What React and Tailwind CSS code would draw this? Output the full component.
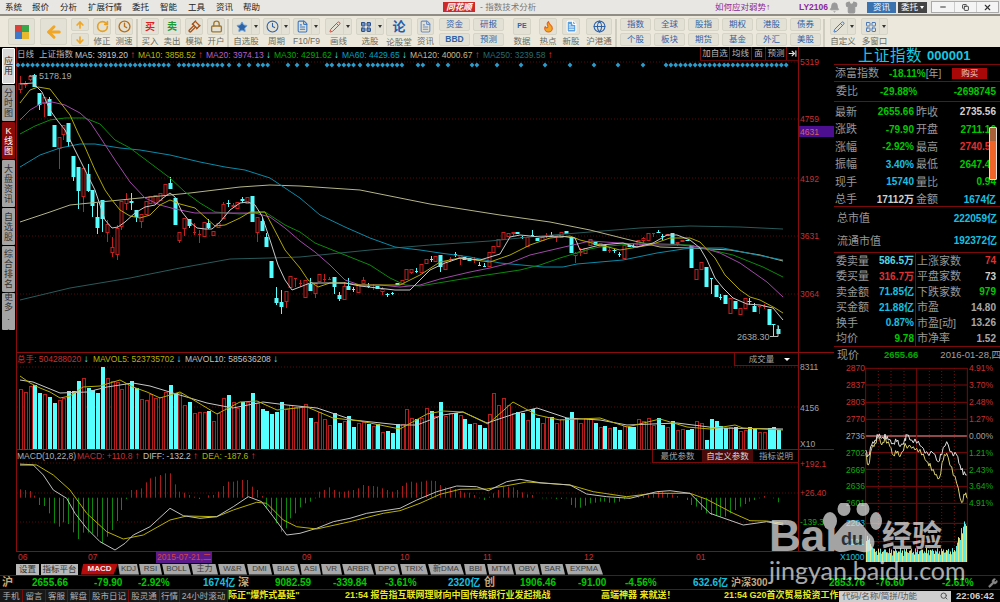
import React from "react";
import { Bell, Shirt, Minus, X, Copy, Gavel, Lock, Flame, Pencil, Wrench, Search, RotateCw, Star, Clock, FileText, Globe, LayoutGrid, ArrowLeft, ArrowUp, ArrowDown, ArrowRightToLine } from "lucide-react";

// candles in page pixels: [red?, bodyTop, bodyBottom, wickTop, wickBottom]
const candles = [
  [1,83,89,76,93],[1,83,84,81,88],[1,76,79,75,81],[0,75,87,74,87],[0,93,105,93,110],[1,97,103,97,117],[0,99,116,97,116],[0,125,147],[1,137,148,137,169],[1,125,134,125,140],
  [0,123,142,123,147],[0,156,177,156,181],[0,167,191,167,209],[1,168,196,168,212],[0,174,191,164,192],[0,190,206,190,217],[0,217,228,203,234],[0,200,219,200,232],[1,224,232,220,242],[1,247,252,237,257],
  [1,228,254,225,260],[1,201,226,201,230],[1,199,203,193,210],[0,201,203,193,210],[0,210,217,210,222],[1,214,221,214,228],[1,201,214],[1,196,203,196,204],[1,195,203],[1,193,200],
  [1,184,195],[0,183,189,177,189],[0,198,225],[1,232,240,232,243],[1,218,228,218,236],[0,219,226,219,228],[1,232,232,223,235],[1,234,234,230,243],[1,222,236],[0,223,228,219,229],
  [1,231,235],[1,223,227],[1,204,218,202,218],[0,203,204,200,207],[1,205,206,203,208],[1,202,208],[0,199,201,197,203],[1,197,203],[0,196,222],[1,217,232,217,242],
  [0,221,231,217,231],[0,237,247,233,247],[0,261,278],[0,298,303,287,305],[0,302,307,290,314],[1,291,301,291,308],[1,276,287],[1,278,278,278,287],
  [1,283,283,280,287],[1,280,297],[0,284,291,278,291],[1,283,293,283,298],[1,274,281],[1,279,279,274,282],[1,279,279,277,280],[0,277,287,277,294],[0,295,299,292,301],[1,286,299,282,299],
  [0,286,290,278,290],[0,289,289,287,292],[1,284,292],[1,280,283,277,283],[0,286,286,283,288],[1,287,287,284,290],[0,286,289],[1,289,291,287,295],[0,294,295,293,297],[0,293,293,292,295],
  [0,283,285],[1,280,284],[1,269,279],[1,269,272,269,274],[0,271,271,268,273],[1,264,272],[1,259,263],[0,259,259,256,262],[1,256,261],[0,255,267,255,272],
  [1,261,269],[1,259,259,257,262],[0,254,254,252,257],[1,255,258,255,265],[0,257,260],[0,258,261],[1,259,259,257,263],[0,265,265,262,266],[0,266,266,263,267],[1,252,266],
  [1,246,252],[1,239,246],[1,232,239],[1,233,236],[1,232,233,232,236],[0,232,234],[0,237,238,236,239],[1,237,246],[0,235,235,230,237],[0,238,241],
  [1,237,240],[1,235,235,233,238],[0,235,236,232,237],[1,236,236,236,242],[1,232,237],[0,231,234],[0,237,253,237,253],[1,253,255,252,263],[1,251,252,248,256],[1,248,253],
  [1,239,245],[0,242,245],[1,243,246],[0,245,251],[1,250,250,248,253],[0,250,251,249,253],[0,254,254,252,257],[1,245,258],[0,245,247],[0,246,246,244,248],
  [1,240,246],[1,238,240,237,244],[1,233,240],[1,233,233,233,237],[0,232,233,230,233],[0,236,236,234,240],[1,234,235],[0,233,244],[1,242,243,242,246],[1,240,241],
  [0,240,241],[0,245,268],[1,269,279],[1,262,269],[0,267,287],[0,278,278,278,294],[0,285,297],[0,297,297,294,300],[0,295,304],[1,298,313],
  [0,301,309],[1,308,314],[1,298,308],[0,301,302,298,305],[0,306,312,303,312],[1,306,306,306,314],[1,306,306,304,309],[0,309,325],[0,324,325,324,336],[0,329,334,326,334],
];

const ma5 = [20,84,33,83,42,92,50,110,57,120,65,130,75,150,85,170,95,190,105,220,112,228,118,227,125,222,135,213,145,207,155,205,163,198,170,193,175,197,182,212,190,222,197,228,205,229,212,229,220,222,230,210,240,203,248,202,255,205,262,216,270,240,278,265,285,280,292,290,300,287,310,283,345,283,360,286,395,290,410,290,415,285,430,270,445,263,460,258,480,260,500,254,510,237,520,235,540,237,560,236,575,238,580,250,600,245,623,243,637,247,653,243,667,235,677,235,690,240,700,248,707,260,715,278,723,288,733,298,747,304,760,305,773,308,783,320];
const ma10 = [20,103,30,90,38,87,50,89,60,102,70,115,78,133,85,147,95,170,105,190,112,200,120,210,130,216,140,218,150,215,160,205,170,200,180,204,195,208,205,217,215,226,225,225,240,218,250,212,265,212,272,225,285,250,300,268,308,280,318,287,330,283,345,283,360,285,400,285,420,275,440,262,460,258,490,262,510,255,530,245,550,238,570,236,580,240,600,245,620,250,650,245,670,238,690,238,700,242,715,258,725,275,740,290,750,297,760,300,775,308,783,313];
const ma20 = [20,120,30,110,42,103,52,102,65,105,80,113,90,122,100,137,115,160,130,182,145,198,160,205,175,209,195,213,240,213,255,213,270,217,285,228,300,241,315,252,330,265,345,280,360,285,380,285,400,287,420,285,440,279,470,272,490,268,510,263,530,255,560,248,590,241,620,243,650,245,680,245,700,247,720,253,740,263,767,282,783,297];
const ma30 = [20,134,35,126,50,120,65,118,85,118,100,124,115,140,130,148,150,163,170,178,185,192,200,203,215,212,240,214,265,212,285,225,300,232,315,243,340,253,370,265,390,278,405,285,420,286,450,281,480,276,520,270,540,265,560,258,590,249,600,247,640,243,690,245,720,252,733,255,763,267,783,277];
const ma60 = [20,167,40,155,60,148,80,144,95,144,120,148,140,150,170,155,200,162,225,167,245,170,270,178,285,188,300,198,320,215,345,227,370,238,395,247,420,250,440,253,470,257,500,263,543,267,563,267,577,264,600,262,623,260,657,253,690,248,723,248,757,255,783,260];
const ma120 = [20,222,50,212,70,205,100,202,140,198,190,193,240,187,270,185,300,186,360,190,430,204,500,215,550,222,590,230,630,240,660,247,690,248,730,250,760,255,783,261];
const ma250 = [20,300,70,288,130,278,180,268,230,259,270,258,300,257,370,250,430,245,490,241,540,236,590,232,640,228,690,226,740,227,783,229];

// volume bar tops in 3x crop units, negative means a cyan bar
const vols = [117,125,108,-104,-130,133,-142,-158,150,143,-124,-124,-94,84,-115,-120,-130,-50,85,93,96,118,100,-94,-115,148,150,132,145,140,125,-106,-128,128,165,-157,190,185,185,-183,212,190,145,-134,155,175,-155,155,-130,160,-177,-183,-192,-185,-155,178,165,170,170,163,-204,215,185,208,226,-190,-218,212,-198,-231,218,215,-222,228,-222,245,-243,-248,-223,
  222,178,205,-207,205,175,-182,198,-156,197,190,-188,195,-207,-222,220,-225,-235,193,130,165,143,165,190,-185,-190,210,-178,-205,218,200,-202,218,208,-205,-187,205,218,203,207,-218,232,-227,235,-232,-240,228,-232,-232,208,213,205,225,-205,-224,232,-213,240,238,-240,-237,213,220,-270,-208,-212,-228,-235,232,-232,243,240,-230,-235,245,245,-233,-230,-241];
const mavol5 = [20,376,30,383,40,388,50,392,60,398,70,396,83,387,100,386,120,380,133,387,147,392,160,398,180,392,197,402,217,414,240,402,257,401,277,410,307,407,333,418,360,421,400,429,427,414,443,411,463,412,488,424,513,402,537,415,560,420,600,418,627,427,660,419,687,427,710,429,735,425,743,428,783,430];
const mavol10 = [20,380,33,382,60,393,87,392,107,387,133,383,150,386,173,393,207,403,233,408,263,402,287,405,317,408,353,420,400,425,417,425,443,415,463,412,487,423,517,413,537,408,567,418,600,420,627,425,677,423,717,428,783,429];

// macd bar ends in 3x crop units, the zero line is at 443
const macd = [418,420,423,437,465,468,490,520,530,517,522,547,567,548,548,550,560,580,560,540,513,480,447,420,420,415,397,385,380,375,370,370,403,425,428,435,440,447,443,436,435,425,408,395,395,392,390,390,410,420,438,475,490,520,545,535,505,490,472,460,455,445,425,420,412,420,425,425,422,420,415,405,408,408,410,415,420,425,420,
  408,398,395,398,395,392,392,393,405,412,415,417,422,428,428,435,445,450,440,430,420,410,410,412,420,427,433,435,443,445,445,445,447,447,445,465,473,473,467,460,458,455,455,458,458,455,448,445,443,440,437,435,428,425,425,430,433,438,443,450,465,470,480,490,495,497,500,500,490,480,470,462,455,450,445,438,443,445,457];
const diff = [60,345,100,345,130,375,160,420,200,445,225,490,260,535,300,575,345,600,375,580,400,555,450,530,510,475,550,497,600,505,650,500,700,470,745,440,785,455,820,500,860,555,900,550,950,535,1000,515,1050,505,1100,490,1200,475,1250,450,1310,425,1370,408,1430,410,1465,422,1520,395,1560,388,1620,398,1710,405,1760,432,1820,440,1890,445,1970,425,2010,422,2070,430,2130,490,2230,525,2300,515,2350,525];
const dea = [60,342,110,345,160,375,210,420,260,490,320,545,370,567,430,555,510,510,560,498,650,500,700,480,770,457,800,460,850,510,890,530,950,537,1050,515,1150,490,1200,482,1260,460,1320,433,1380,418,1460,417,1520,407,1580,396,1710,405,1780,425,1880,440,1960,430,2070,430,2120,448,2200,490,2250,512,2300,513,2350,520];

const miniWhite = [107,330,115,345,125,315,135,300,145,290,155,295,165,282,175,300,190,310,200,305,210,320,225,295,230,285,245,300,260,310,275,320,290,335,310,340,325,365,335,345,350,305,365,335,380,345,390,375,400,405,410,405];
const miniYellow = [107,340,115,375,125,325,135,310,145,295,155,315,165,290,180,320,190,345,200,340,210,350,225,310,245,325,260,325,275,345,290,365,300,370,315,405,328,415,340,360,350,340,365,380,380,430,395,488,405,465,412,475];

const dots = [[18,37],[43,81],[86,101],[106,149],[154,168],[179,193],[198,222],[229,229],[239,239],[249,249],[258,266],[288,288],[297,297],[307,307],[327,333],[339,353],[360,360],[368,402],[418,425],[438,438],[448,448],[472,478],[497,497],[521,521],[545,545],[570,570],[594,594],[618,618],[643,643],[666,723],[728,786]];

const toPts = (a, fx = (v) => v, fy = (v) => v) => {
  const out = [];
  for (let i = 0; i < a.length; i += 2) out.push(`${fx(a[i]).toFixed(1)},${fy(a[i + 1]).toFixed(1)}`);
  return out.join(" ");
};
// roughens a minute line: extra points between the anchors
const jag = (a) => {
  const out = [];
  for (let i = 0; i + 2 < a.length; i += 2) {
    for (let k = 0; k < 3; k++) {
      const t = k / 3;
      const wob = k === 0 ? 0 : ((i + k * 7) % 5 - 2) * 5;
      out.push(a[i] + (a[i + 2] - a[i]) * t, a[i + 1] + (a[i + 3] - a[i + 1]) * t + wob);
    }
  }
  out.push(a[a.length - 2], a[a.length - 1]);
  return out;
};
const barX = (i) => 20 + i * 4.83;

function Line({ pts, color, w = 1 }) {
  return <polyline points={pts} fill="none" stroke={color} strokeWidth={w} strokeLinejoin="round" />;
}

function Tool({ className, label, arrow, children }) {
  return (
    <div className={`flex flex-col items-center ${className}`}>
      <div className="h-[18px] w-full flex bg-[#e3e1d5] border border-[#d6d4c7] rounded-[2px]">
        <div className="flex-1 flex items-center justify-center min-w-0">{children}</div>
        {arrow && (
          <div className="w-[8px] flex items-center justify-center border-l border-[#d6d4c7]">
            <div className="w-0 h-0 border-x-[2.5px] border-x-transparent border-t-[3px] border-t-[#333]" />
          </div>
        )}
      </div>
      <div className="mt-[1px] text-[8.5px] leading-[11px] text-[#6a6a60] whitespace-nowrap">{label}</div>
    </div>
  );
}

function Sep({ className }) {
  return <div className={`w-[2px] h-[28px] mt-[1px] border-l border-r border-[#cfcdbf] ${className}`} />;
}

function MiniBtn({ children, bold }) {
  return (
    <div className={`h-[13px] w-full flex items-center justify-center bg-[#e3e1d5] border border-[#d6d4c7] rounded-[2px] text-[8.5px] text-[#2f63a8] ${bold ? "font-bold" : ""}`}>
      {children}
    </div>
  );
}

function Toolbar() {
  const pairs = [["指数", "个股"], ["全球", "板块"], ["股指", "期货"], ["期权", "基金"], ["港股", "外汇"], ["债券", "美股"]];
  return (
    <div className="h-[31px] flex pt-[2px] bg-[#ece9dc]">
      <div className="ml-[8px] w-[27px] h-[27px] flex items-center justify-center bg-[#e3e1d5] border border-[#d6d4c7] rounded-[2px]">
        <div className="grid grid-cols-2 w-[14px] h-[14px]">
          <div className="bg-[#d9423a]" />
          <div className="bg-[#3aa64a]" />
          <div className="bg-[#3f78c8]" />
          <div className="bg-[#e8b92e]" />
        </div>
      </div>
      <div className="ml-[5px] w-[27px] h-[27px] flex items-center justify-center bg-[#e3e1d5] border border-[#d6d4c7] rounded-[2px]">
        <ArrowLeft size={18} strokeWidth={4} color="#f0a626" />
      </div>
      <div className="ml-[4px] w-[18px] flex flex-col gap-[2px]">
        <MiniBtn><ArrowUp size={10} strokeWidth={4} color="#f0a626" /></MiniBtn>
        <MiniBtn><ArrowDown size={10} strokeWidth={4} color="#f0a626" /></MiniBtn>
      </div>
      <Tool className="ml-[4px] w-[18px]" label="修正"><RotateCw size={13} strokeWidth={3} color="#e8a020" /></Tool>
      <Tool className="ml-[4px] w-[18px]" label="测速"><Clock size={13} strokeWidth={2.5} color="#b8701c" /></Tool>
      <Sep className="ml-[3px]" />
      <Tool className="ml-[3px] w-[18px]" label="买入"><span className="text-[10px] font-bold text-[#e02020]">买</span></Tool>
      <Tool className="ml-[4px] w-[18px]" label="卖出"><span className="text-[10px] font-bold text-[#1a9a3a]">卖</span></Tool>
      <Tool className="ml-[4px] w-[18px]" label="模拟"><Gavel size={13} strokeWidth={2.5} color="#a8551c" /></Tool>
      <Tool className="ml-[4px] w-[18px]" label="开户"><Lock size={13} strokeWidth={2.5} color="#a07830" /></Tool>
      <Sep className="ml-[2px]" />
      <Tool className="ml-[3px] w-[28px]" label="自选股" arrow><Star size={12} fill="#2f63a8" color="#6ea4dc" /></Tool>
      <Tool className="ml-[3px] w-[27px]" label="周期" arrow><Clock size={13} color="#2f63a8" /></Tool>
      <Tool className="ml-[3px] w-[27px]" label="F10/F9" arrow><FileText size={13} color="#3a78c8" /></Tool>
      <Tool className="ml-[5px] w-[27px]" label="画线" arrow><Pencil size={12} color="#d04a3a" /></Tool>
      <Tool className="ml-[4px] w-[28px]" label="选股" arrow><LayoutGrid size={12} color="#28508c" fill="#6f8fbf" /></Tool>
      <Tool className="ml-[2px] w-[26px]" label="论股堂"><span className="text-[13px] font-bold text-[#1d5fae]">论</span></Tool>
      <Tool className="ml-[5px] w-[17px]" label="资讯"><FileText size={13} color="#6f8fbf" /></Tool>
      <div className="ml-[5px] w-[31px] flex flex-col gap-[2px]">
        <MiniBtn>资金</MiniBtn>
        <MiniBtn bold>BBD</MiniBtn>
      </div>
      <div className="ml-[3px] w-[31px] flex flex-col gap-[2px]">
        <MiniBtn>研报</MiniBtn>
        <MiniBtn>预测</MiniBtn>
      </div>
      <Tool className="ml-[9px] w-[18px]" label="数据"><span className="text-[7px] font-bold text-[#2f63a8]">PE</span></Tool>
      <Tool className="ml-[8px] w-[18px]" label="热点"><Flame size={13} color="#e8601c" fill="#f0a626" /></Tool>
      <Tool className="ml-[5px] w-[18px]" label="新股"><FileText size={13} color="#ffffff" fill="#5aa0e0" /></Tool>
      <Tool className="ml-[6px] w-[26px]" label="沪港通"><Globe size={13} color="#2f63a8" /></Tool>
      <Sep className="ml-[3px]" />
      <div className="ml-[3px] flex gap-[3px]">
        {pairs.map((p) => (
          <div key={p[0]} className="w-[31px] flex flex-col gap-[2px]">
            <MiniBtn>{p[0]}</MiniBtn>
            <MiniBtn>{p[1]}</MiniBtn>
          </div>
        ))}
      </div>
      <Sep className="ml-[2px]" />
      <Tool className="ml-[5px] w-[26px]" label="自定义" arrow><Pencil size={12} color="#3a78c8" /></Tool>
      <Tool className="ml-[5px] w-[27px]" label="多窗口" arrow><LayoutGrid size={12} color="#4a78b8" /></Tool>
    </div>
  );
}

function TopBar() {
  const menus = [["系统", "w-[27px]"], ["报价", "w-[28px]"], ["分析", "w-[28px]"], ["扩展行情", "w-[44px]"], ["委托", "w-[28px]"], ["智能", "w-[28px]"], ["工具", "w-[28px]"], ["资讯", "w-[27px]"], ["帮助", "w-[27px]"]];
  return (
    <div className="h-[14px] flex items-center bg-[#e9e7e3] text-[8.5px] text-[#222]">
      <div className="ml-[5px] flex">
        {menus.map((m) => <div key={m[0]} className={m[1]}>{m[0]}</div>)}
      </div>
      <div className="ml-[173px] h-[10px] w-[32px] flex items-center justify-center bg-[#cc2a2a] italic font-bold text-white text-[8.5px]">同花顺</div>
      <div className="ml-[5px] w-[235px] text-[#777]">- 指数技术分析</div>
      <div className="w-[84px] text-[#8a2a9a] whitespace-nowrap">如何应对弱势↑</div>
      <div className="w-[29px] text-[#8a2a9a] font-bold whitespace-nowrap">LY2106</div>
      <Bell size={11} fill="#999" color="#999" className="ml-[1px]" />
      <Shirt size={13} fill="#999" color="#999" className="ml-[5px]" />
      <div className="ml-[9px] w-[29px] h-[11px] flex items-center justify-center bg-[#3a72b0] text-white">资讯</div>
      <div className="ml-[2px] w-[29px] h-[11px] flex items-center justify-center gap-[2px] bg-[#444] text-white">
        委托<div className="w-0 h-0 border-x-[2px] border-x-transparent border-t-[3px] border-t-white" />
      </div>
      <div className="ml-[4px] flex h-[12px] bg-[#f4f4f4] border border-[#aaa]">
        <div className="w-[22px] flex items-center justify-center"><Minus size={8} strokeWidth={3} color="#333" /></div>
        <div className="w-[22px] flex items-center justify-center border-l border-[#ccc]"><Copy size={7} strokeWidth={3} color="#333" /></div>
        <div className="w-[22px] flex items-center justify-center border-l border-[#ccc]"><X size={9} strokeWidth={3} color="#333" /></div>
      </div>
    </div>
  );
}

function SideTabs() {
  const tabs = [
    ["应用", "h-[36px] bg-[#d8d8d8] border border-white text-[#333]"],
    ["分时图", "h-[36px] bg-[#a4a4a4] text-[#333]"],
    ["K线图", "h-[37px] bg-[#8c0a0a] text-white"],
    ["大盘资讯", "h-[47px] bg-[#a4a4a4] text-[#333]"],
    ["自选股", "h-[37px] bg-[#a4a4a4] text-[#333]"],
    ["综合排名", "h-[46px] bg-[#a4a4a4] text-[#333]"],
    ["更多..", "h-[37px] bg-[#a4a4a4] text-[#333]"],
  ];
  return (
    <div className="w-[16px] pl-[2px] pt-[1px] pr-[1px] flex flex-col gap-[1px] bg-black">
      {tabs.map((t) => (
        <div key={t[0]} className={`flex flex-col items-center justify-center text-[9px] leading-[10px] rounded-[1px] ${t[1]}`}>
          {Array.from(t[0]).map((c, i) => <span key={i}>{c}</span>)}
        </div>
      ))}
    </div>
  );
}

function ChartSvg() {
  const grid = "#5a0808";
  const axis = "#8a0c0c";
  const axisText = { fontSize: 8.5, fill: "#c83030" };
  return (
    <svg width="818" height="516" viewBox="16 47 818 516" className="block">
      {[62, 119, 178, 236, 294, 367, 407, 463, 493, 522].map((y) => (
        <line key={y} x1="17" x2="798" y1={y} y2={y} stroke={grid} strokeDasharray="1 2" />
      ))}
      <line x1="16.5" x2="16.5" y1="47" y2="551" stroke={axis} />
      <line x1="798.5" x2="798.5" y1="47" y2="551" stroke={axis} />
      <line x1="16" x2="834" y1="352.5" y2="352.5" stroke={axis} />
      <line x1="16" x2="834" y1="449.5" y2="449.5" stroke={axis} />
      <line x1="16" x2="834" y1="551.5" y2="551.5" stroke={axis} />

      {dots.map(([a, b], k) => {
        const n = Math.round((b - a) / 4.85);
        return Array.from({ length: n + 1 }, (_, j) => {
          const x = a + j * 4.85;
          return <polygon key={k + "-" + j} points={`${x},62.5 ${x + 2.4},65 ${x},67.5 ${x - 2.4},65`} fill="#2a9ccb" />;
        });
      })}

      {candles.map((c, i) => {
        const x = Math.round(barX(i));
        const col = c[0] ? "#c42020" : "#55ffff";
        const wt = c[3] ?? c[1];
        const wb = c[4] ?? c[2];
        const flat = c[2] - c[1] < 1;
        return (
          <g key={i}>
            <line x1={x + 0.5} x2={x + 0.5} y1={wt} y2={wb} stroke={col} />
            {flat ? (
              <line x1={x - 1} x2={x + 2} y1={c[1] + 0.5} y2={c[1] + 0.5} stroke={col} />
            ) : c[0] ? (
              <rect x={x - 1} y={c[1] + 0.5} width="3" height={c[2] - c[1]} fill="#000" stroke={col} />
            ) : (
              <rect x={x - 1.5} y={c[1]} width="4" height={c[2] - c[1]} fill={col} />
            )}
          </g>
        );
      })}

      <Line pts={toPts(ma250)} color="#2a5a5a" />
      <Line pts={toPts(ma120)} color="#b4b488" />
      <Line pts={toPts(ma60)} color="#0a8aa8" />
      <Line pts={toPts(ma30)} color="#0a8a0a" />
      <Line pts={toPts(ma20)} color="#a048a8" />
      <Line pts={toPts(ma10)} color="#b0a800" />
      <Line pts={toPts(ma5)} color="#c8c8c8" />

      <polyline points="29,76 37,76" stroke="#aaa" fill="none" />
      <text x="39" y="79" fontSize="9" fill="#a8a8a8">5178.19</text>
      <polyline points="770,336.5 778,336.5 778,325" stroke="#bbb" fill="none" />
      <text x="737" y="340" fontSize="9" fill="#a8a8a8">2638.30</text>

      {vols.map((v, i) => {
        const x = Math.round(barX(i));
        const top = Math.round(350 + Math.abs(v) / 3);
        return v > 0 ? (
          <rect key={i} x={x - 0.5} y={top + 0.5} width="3" height={449 - top} fill="#000" stroke="#b81c1c" />
        ) : (
          <rect key={i} x={x - 1} y={top} width="4" height={449 - top} fill="#55ffff" />
        );
      })}
      <Line pts={toPts(mavol10)} color="#c8c8c8" />
      <Line pts={toPts(mavol5)} color="#b8b000" />

      {macd.map((v, i) => {
        const x = Math.round(barX(i)) + 0.5;
        const y = 350 + v / 3;
        return <line key={i} x1={x} x2={x} y1={497.7} y2={y} stroke={v < 443 ? "#a81c1c" : "#0a8a0a"} />;
      })}
      <Line pts={toPts(dea, (v) => v / 3, (v) => 350 + v / 3)} color="#b8b000" />
      <Line pts={toPts(diff, (v) => v / 3, (v) => 350 + v / 3)} color="#c0c0c0" />

      {[["5319", 65], ["4759", 122], ["4192", 182], ["3631", 239], ["3064", 297]].map(([t, y]) => (
        <text key={t} x="800" y={y} {...axisText}>{t}</text>
      ))}
      <rect x="799" y="126" width="35" height="11" fill="#4b0f90" />
      <text x="800" y="135" fontSize="8.5" fill="#d86060">4631</text>
      <text x="800" y="370" fontSize="8.5" fill="#a0a0a0">8311</text>
      <text x="800" y="411" fontSize="8.5" fill="#a0a0a0">4156</text>
      <text x="800" y="447" fontSize="8.5" fill="#a0a0a0">X10</text>
      <text x="800" y="467" {...axisText}>+192.1</text>
      <text x="800" y="496" {...axisText}>+26.40</text>
      <text x="800" y="525" fontSize="8.5" fill="#10a810">-139.3</text>

      {[["06", 18], ["07", 88], ["09", 302], ["10", 400], ["11", 483], ["12", 584], ["01", 696]].map(([t, x]) => (
        <text key={t} x={x} y="560" {...axisText}>{t}</text>
      ))}
      <rect x="156" y="551" width="56" height="12" fill="#5a1a8a" />
      <text x="157" y="560" fontSize="8.5" fill="#d04848">2015-07-21,二</text>
    </svg>
  );
}

function Arrow({ up }) {
  return <span className={`text-[10px] font-bold ${up ? "text-[#ff3030]" : "text-[#50f0f0]"}`}>{up ? "↑" : "↓"}</span>;
}

function Legends() {
  const items = [
    ["MA5: 3919.20", "text-[#c8c8c8]", true, "w-[63px]"],
    ["MA10: 3858.52", "text-[#b8b800]", true, "w-[68px]"],
    ["MA20: 3974.13", "text-[#b060d0]", false, "w-[68px]"],
    ["MA30: 4291.62", "text-[#00a800]", false, "w-[68px]"],
    ["MA60: 4429.65", "text-[#00a0c0]", false, "w-[68px]"],
    ["MA120: 4000.67", "text-[#c8b888]", true, "w-[73px]"],
    ["MA250: 3239.58", "text-[#2a6a6a]", true, "w-[73px]"],
  ];
  return (
    <>
      <div className="absolute left-[1px] top-0 h-[14px] flex items-center text-[8.5px] whitespace-nowrap">
        <div className="w-[22px] text-[#b8b8b8]">日线</div>
        <div className="w-[36px] text-[#b8b8b8]">上证指数</div>
        {items.map((m) => (
          <div key={m[0]} className={`${m[3]} ${m[1]}`}>{m[0]} <Arrow up={m[2]} /></div>
        ))}
      </div>
      <div className="absolute left-[684px] top-0 h-[14px] flex text-[8.5px] text-[#b8b8b8] border-b border-[#5a0808]">
        <div className="w-[29px] flex items-center justify-center border-l border-[#7a0a0a]">加自选</div>
        <div className="w-[22px] flex items-center justify-center border-l border-[#7a0a0a]">均线</div>
        <div className="w-[14px] flex items-center justify-center border-l border-[#7a0a0a]">面</div>
        <div className="w-[21px] flex items-center justify-center border-l border-[#7a0a0a]">预测</div>
        <div className="w-[12px] flex items-center justify-center border-l border-[#7a0a0a]"><ArrowRightToLine size={9} color="#ddd" strokeWidth={3} /></div>
      </div>
      <div className="absolute left-[1px] top-[306px] flex text-[8.5px] leading-[12px] whitespace-nowrap">
        <div className="w-[76px] text-[#c83030]">总手: 504288020 <Arrow /></div>
        <div className="w-[92px] text-[#b8b000]">MAVOL5: 523735702 <Arrow /></div>
        <div className="text-[#c0c0c0]">MAVOL10: 585636208 <Arrow /></div>
      </div>
      <div className="absolute left-[718px] top-[306px] w-[64px] h-[13px] flex items-center justify-center gap-[10px] pl-[6px] border-l border-b border-[#7a0a0a] text-[8.5px] text-[#a0a0a0]">
        成交量<div className="w-0 h-0 border-x-[3px] border-x-transparent border-t-[3px] border-t-white" />
      </div>
      <div className="absolute left-[1px] top-[403px] flex text-[8.5px] leading-[12px] whitespace-nowrap">
        <div className="w-[60px] text-[#b0b0b0]">MACD(10,22,8)</div>
        <div className="w-[66px] text-[#c83030]">MACD: +110.8 <Arrow up /></div>
        <div className="w-[59px] text-[#c0c0c0]">DIFF: -132.2 <Arrow up /></div>
        <div className="text-[#b8b000]">DEA: -187.6 <Arrow up /></div>
      </div>
      <div className="absolute left-[636px] top-[403px] h-[13px] flex text-[8.5px] text-[#a0a0a0] border-l border-b border-[#7a0a0a]">
        <div className="w-[49px] flex items-center justify-center">最优参数</div>
        <div className="w-[51px] flex items-center justify-center bg-[#4a0a0a] text-[#d8d8d8]">自定义参数</div>
        <div className="w-[46px] flex items-center justify-center">指标说明</div>
      </div>
    </>
  );
}

const Lbl = ({ children }) => <span className="text-[11px] font-normal text-[#989898] whitespace-nowrap">{children}</span>;
const clr = { g: "text-[#00c800]", r: "text-[#e03030]", c: "text-[#18c0e0]", w: "text-[#d0d0d0]", gray: "text-[#a8a8a8]" };

function QuoteRows() {
  const rows = [
    ["最新", "2655.66", "g", "昨收", "2735.56", "w"],
    ["涨跌", "-79.90", "g", "开盘", "2711.16", "g"],
    ["涨幅", "-2.92%", "g", "最高", "2740.50", "r"],
    ["振幅", "3.40%", "c", "最低", "2647.47", "g"],
    ["现手", "15740", "c", "量比", "0.94", "g"],
    ["总手", "17112万", "w", "金额", "1674亿", "c"],
  ];
  return (
    <div className="h-[105px] border-t border-[#7a0a0a] pt-[1px]">
      {rows.map((r) => (
        <div key={r[0]} className="h-[17.5px] flex items-center text-[10px] font-bold">
          <div className="w-[30px] pl-[1px]"><Lbl>{r[0]}</Lbl></div>
          <div className={`w-[50px] text-right ${clr[r[2]]}`}>{r[1]}</div>
          <div className="ml-[2px] w-[30px]"><Lbl>{r[3]}</Lbl></div>
          <div className={`w-[50px] text-right ${clr[r[5]]}`}>{r[4]}</div>
        </div>
      ))}
    </div>
  );
}

function StatRows() {
  const left = [["委卖量", "586.5万", "text-[#50d8e8]"], ["委买量", "316.7万", "text-[#e03030]"], ["卖金额", "71.85亿", "text-[#18c0e0]"], ["买金额", "21.88亿", "text-[#18c0e0]"], ["换手", "0.87%", "text-[#18c0e0]"], ["均价", "9.78", "text-[#00c800]"]];
  const right = [["上涨家数", "74", "text-[#e03030]"], ["平盘家数", "73", "text-[#d0d0d0]"], ["下跌家数", "979", "text-[#00c800]"], ["市盈", "14.80", "text-[#a8a8a8]"], ["市盈[动]", "13.26", "text-[#a8a8a8]"], ["市净率", "1.52", "text-[#a8a8a8]"]];
  const col = (list, cls) => (
    <div className={`flex flex-col ${cls}`}>
      {list.map((r) => (
        <div key={r[0]} className="h-[15.5px] flex items-center justify-between text-[10px] font-bold">
          <Lbl>{r[0]}</Lbl>
          <span className={r[2]}>{r[1]}</span>
        </div>
      ))}
    </div>
  );
  return (
    <div className="h-[94px] flex border-t border-[#7a0a0a]">
      {col(left, "w-[82px] pl-[2px] pr-[1px] border-r border-[#7a0a0a]")}
      {col(right, "w-[80px] pl-[1px]")}
    </div>
  );
}

function MiniChart() {
  const mx = (v) => 830 + v / 3;
  const my = (v) => 340 + v / 3;
  const vlines = [107, 145, 183, 222, 260, 298, 335, 373, 412];
  const hlines = [85, 135, 187, 238, 288, 338, 388, 440, 490, 550, 605, 665];
  const lefts = [["2870", "#c83030"], ["2837", "#c83030"], ["2803", "#c83030"], ["2770", "#c83030"], ["2736", "#a0a0a0"], ["2702", "#10a810"], ["2669", "#10a810"], ["2636", "#10a810"], ["2601", "#10a810"]];
  const rights = [["4.91%", "#c83030"], ["3.70%", "#c83030"], ["2.48%", "#c83030"], ["1.27%", "#c83030"], ["0.00%", "#a0a0a0"], ["1.21%", "#10a810"], ["2.43%", "#10a810"], ["3.64%", "#10a810"], ["4.91%", "#10a810"]];
  const bars = Array.from({ length: 101 }, (_, i) => {
    const base = 5 + 5 * Math.abs(Math.sin(i * 1.7)) + 4 * Math.abs(Math.sin(i * 0.6));
    const boost = i < 8 ? 16 - i * 2 : i > 88 ? (i - 88) * 3.2 * (0.5 + 0.5 * Math.abs(Math.sin(i * 2.1))) : 0;
    return base + boost;
  });
  return (
    <svg width="166" height="199" viewBox="834 364 166 199" className="block">
      {hlines.map((h) => (
        <line key={h} x1="866" x2="967" y1={my(h)} y2={my(h)} stroke={h === 288 ? "#c06060" : "#7a0a0a"} strokeWidth={h === 288 ? 1.4 : 1} />
      ))}
      {vlines.map((v) => (
        <line key={v} x1={mx(v)} x2={mx(v)} y1="368" y2="562" stroke="#7a0a0a" strokeDasharray={[107, 260, 412].includes(v) ? undefined : "1 2"} />
      ))}
      {bars.map((h, i) => (
        <line key={i} x1={866.5 + i} x2={866.5 + i} y1="562" y2={562 - h} stroke={i % 4 === 0 ? "#e8e880" : "#55f0f0"} />
      ))}
      <Line pts={toPts(jag(miniYellow), mx, my)} color="#d8d070" />
      <Line pts={toPts(jag(miniWhite), mx, my)} color="#e0e0e0" />
      {lefts.map(([t, c], i) => (
        <text key={i} x="846" y={my(85 + i * 50.6) + 3} fontSize="8.5" fill={c}>{t}</text>
      ))}
      {rights.map(([t, c], i) => (
        <text key={i} x="969" y={my(85 + i * 50.6) + 3} fontSize="8.5" fill={c}>{t}</text>
      ))}
      <text x="846" y="526" fontSize="8.5" fill="#18c0e0">2203</text>
      <text x="846" y="545" fontSize="8.5" fill="#18c0e0">1101</text>
      <text x="840" y="560" fontSize="8.5" fill="#18c0e0">X1000</text>
    </svg>
  );
}

function RightPanel() {
  return (
    <div className="relative w-[166px] bg-black">
      <div className="h-[17px] pl-[24px] flex items-center gap-[5px] text-[#18c8e0] whitespace-nowrap">
        <span className="text-[15.5px] tracking-[0.5px]">上证指数</span>
        <span className="text-[13px] font-bold">000001</span>
      </div>
      <div className="h-[17px] flex items-center border-t border-[#7a0a0a] pl-[1px]">
        <Lbl>添富指数</Lbl>
        <span className="ml-[10px] text-[10px] font-bold text-[#00c800]">-18.11%</span>
        <span className="text-[10px] text-[#a0a0a0]">[年]</span>
        <div className="ml-[11px] w-[35px] h-[11px] flex items-center justify-center bg-[#a80808] text-[8.5px] text-[#e8d0d0]">购买</div>
      </div>
      <div className="h-[20px] flex items-center border-t border-[#7a0a0a] pl-[2px] text-[10px] font-bold text-[#00c800]">
        <Lbl>委比</Lbl>
        <span className="ml-[22px]">-29.88%</span>
        <span className="ml-auto mr-[4px]">-2698745</span>
      </div>
      <QuoteRows />
      <div className="h-[46px] flex flex-col justify-around border-t border-[#7a0a0a] px-[3px] text-[10px] font-bold text-[#18c0e0]">
        <div className="flex justify-between items-center"><Lbl>总市值</Lbl><span>222059亿</span></div>
        <div className="flex justify-between items-center"><Lbl>流通市值</Lbl><span>192372亿</span></div>
      </div>
      <StatRows />
      <div className="h-[18px] flex items-center border-t border-[#7a0a0a] pl-[3px] text-[9.5px]">
        <Lbl>现价</Lbl>
        <span className="ml-[25px] text-[#00a800] font-bold">2655.66</span>
        <span className="ml-[22px] text-[#a0a0a0] whitespace-nowrap">2016-01-28,四</span>
      </div>
      <MiniChart />
      {/* scroller on the quote block */}
      <div className="absolute left-[155px] top-[80px] w-[8px] h-[53px] border border-[#e0e0e0] rounded-[1px] bg-[#f06428] overflow-hidden">
        <div className="h-[13px] bg-[#a86038]" />
      </div>
    </div>
  );
}

function IndicatorTabs() {
  const tabs = [["KDJ", "w-[21px]"], ["RSI", "w-[23px]"], ["BOLL", "w-[29px]"], ["主力", "w-[27px]"], ["W&R", "w-[29px]"], ["DMI", "w-[25px]"], ["BIAS", "w-[28px]"], ["ASI", "w-[21px]"], ["VR", "w-[21px]"], ["ARBR", "w-[32px]"], ["DPO", "w-[26px]"], ["TRIX", "w-[28px]"], ["新DMA", "w-[36px]"], ["BBI", "w-[23px]"], ["MTM", "w-[27px]"], ["OBV", "w-[26px]"], ["SAR", "w-[25px]"], ["EXPMA", "w-[38px]"]];
  return (
    <div className="h-[12px] flex items-center bg-black text-[8px] pl-[16px]">
      <div className="w-[23px] h-[11px] flex items-center justify-center bg-[#b8b8b8] text-[#333] text-[8.5px]">设置</div>
      <div className="ml-[2px] w-[37px] h-[11px] flex items-center justify-center bg-[#b8b8b8] text-[#333] text-[8.5px]">指标平台</div>
      <div className="ml-[3px] w-[37px] h-[11px] flex items-center justify-center bg-[#b80c0c] font-bold text-[#f0e8e8] [clip-path:polygon(6%_0,100%_0,88%_100%,0_100%)]">MACD</div>
      {tabs.map((t) => (
        <div key={t[0]} className={`${t[1]} h-[11px] flex items-center justify-center bg-[#a8a8a8] text-[#3c3c3c] [clip-path:polygon(0_0,90%_0,100%_100%,8%_100%)]`}>{t[0]}</div>
      ))}
    </div>
  );
}

function QuoteBar() {
  const cells = [
    ["沪", "w-[32px] text-[#c8a878] text-[11px] pl-[2px]"],
    ["2655.66", "w-[62px] text-[#00c800]"],
    ["-79.90", "w-[44px] text-[#00c800]"],
    ["-2.92%", "w-[65px] text-[#00c800]"],
    ["1674亿", "w-[35px] text-[#18c0e0]"],
    ["深", "w-[37px] text-[#c8a878] text-[11px]"],
    ["9082.59", "w-[58px] text-[#00c800]"],
    ["-339.84", "w-[52px] text-[#00c800]"],
    ["-3.61%", "w-[63px] text-[#00c800]"],
    ["2320亿", "w-[36px] text-[#18c0e0]"],
    ["创", "w-[36px] text-[#c8a878] text-[11px]"],
    ["1906.46", "w-[58px] text-[#00c800]"],
    ["-91.00", "w-[47px] text-[#00c800]"],
    ["-4.56%", "w-[68px] text-[#00c800]"],
    ["632.6亿", "w-[38px] text-[#18c0e0]"],
    ["沪深300", "w-[98px] text-[#c8a878]"],
    ["2853.76", "w-[47px] text-[#00c800]"],
    ["-76.60", "w-[66px] text-[#00c800]"],
    ["-2.61%", "w-[46px] text-[#00c800]"],
  ];
  return (
    <div className="h-[14px] flex items-center bg-black border-t border-[#7a0a0a] text-[10px] font-bold whitespace-nowrap">
      {cells.map((c, i) => <div key={i} className={c[1]}>{c[0]}</div>)}
      <Wrench size={10} color="#888" fill="#888" />
    </div>
  );
}

function StatusBar() {
  const btns = [["手机", "w-[23px]"], ["留言", "w-[23px]"], ["客服", "w-[22px]"], ["解盘", "w-[22px]"], ["股市日记", "w-[39px]"], ["股灵通", "w-[31px]"], ["行情", "w-[20px]"], ["24小时滚动", "w-[48px]"]];
  return (
    <div className="h-[13px] flex items-center bg-black border-t border-[#7a0a0a] text-[8.5px] whitespace-nowrap overflow-hidden">
      {btns.map((b) => (
        <div key={b[0]} className={`${b[1]} h-full flex items-center justify-center border-r border-[#7a0a0a] bg-[#181818] text-[#b0b0b0]`}>{b[0]}</div>
      ))}
      <div className="w-[611px] flex text-[#e8e820] text-[9px] font-bold overflow-hidden">
        <div className="w-[117px] shrink-0">际正"爆炸式基延"</div>
        <div className="w-[256px] shrink-0">21:54 报告指互联网理财向中国传统银行业发起挑战</div>
        <div className="w-[123px] shrink-0">高端神器 来就送！</div>
        <div className="shrink-0">21:54 G20首次贸易投资工作</div>
      </div>
      <div className="w-[112px] h-[11px] flex items-center justify-between px-[3px] bg-[#cfcfcf] text-[#555]">
        代码/名称/简拼/功能<Search size={8} color="#555" strokeWidth={3} />
      </div>
      <div className="ml-[5px] text-[9.5px] text-[#d0d0d0] font-bold">22:06:42</div>
    </div>
  );
}

function Watermark() {
  return (
    <div className="absolute left-[768px] top-[503px] w-[232px] h-[80px] text-white opacity-70 pointer-events-none">
      <div className="absolute left-[1px] top-[9px] text-[44px] leading-[48px] font-bold text-[#e8e8e8]">Bai</div>
      <svg width="62" height="52" viewBox="0 0 62 52" className="absolute left-[53px] top-0">
        <ellipse cx="9" cy="18" rx="7" ry="9" fill="#e8e8e8" />
        <ellipse cx="23" cy="6" rx="6.5" ry="7" fill="#e8e8e8" />
        <ellipse cx="42" cy="6" rx="6.5" ry="7" fill="#e8e8e8" />
        <ellipse cx="55" cy="18" rx="6" ry="9" fill="#e8e8e8" />
        <path d="M32 17c-9 0-13 10-19 15-6 6-3 17 7 17 5 0 8-2 12-2s8 3 13 2c9-1 11-12 5-17-6-5-9-15-18-15z" fill="#e8e8e8" />
      </svg>
      <div className="absolute left-[73px] top-[26px] text-[18px] leading-[20px] font-bold text-[#444]">du</div>
      <div className="absolute left-[114px] top-[16px] text-[30px] leading-[34px] font-bold text-[#f0f0f0] whitespace-nowrap">经验</div>
      <div className="absolute left-[1px] top-[53px] text-[25px] leading-[28px] text-[#f0f0f0] whitespace-nowrap [font-family:'Lato',sans-serif]">jingyan.baidu.com</div>
    </div>
  );
}

export default function App() {
  return (
    <div className="relative w-[1000px] h-[602px] overflow-hidden flex flex-col bg-black [font-family:'Liberation_Sans','Noto_Sans_CJK_SC',sans-serif]">
      <TopBar />
      <div className="h-[2px] bg-[#8f8d84]" />
      <Toolbar />
      <div className="flex h-[516px]">
        <SideTabs />
        <div className="relative w-[818px]">
          <ChartSvg />
          <Legends />
        </div>
        <RightPanel />
      </div>
      <IndicatorTabs />
      <QuoteBar />
      <StatusBar />
      <Watermark />
    </div>
  );
}
